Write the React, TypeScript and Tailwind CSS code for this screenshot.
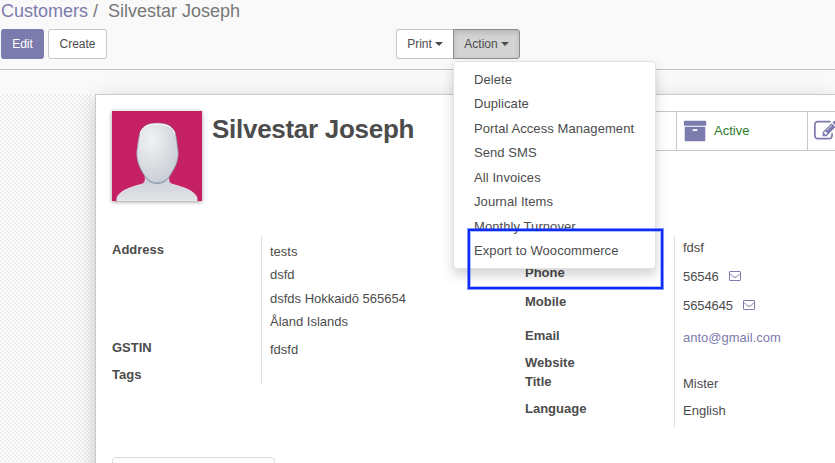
import React from 'react';

const actions = [
  'Delete',
  'Duplicate',
  'Portal Access Management',
  'Send SMS',
  'All Invoices',
  'Journal Items',
  'Monthly Turnover',
  'Export to Woocommerce',
];

type Line = { text: string; h: string; mail?: boolean; link?: boolean };

const leftLabels: Line[] = [
  { text: 'Address', h: 'h-[98px]' },
  { text: 'GSTIN', h: 'h-[27px]' },
  { text: 'Tags', h: 'h-[20px]' },
];
const leftValues: Line[] = [
  { text: 'tests', h: 'h-[23px]' },
  { text: 'dsfd', h: 'h-[24px]' },
  { text: 'dsfds Hokkaidō 565654', h: 'h-[23px]' },
  { text: 'Åland Islands', h: 'h-[28px]' },
  { text: 'fdsfd', h: 'h-[20px]' },
];
const rightLabels: Line[] = [
  { text: 'Phone', h: 'h-[29px]' },
  { text: 'Mobile', h: 'h-[34px]' },
  { text: 'Email', h: 'h-[27px]' },
  { text: 'Website', h: 'h-[19px]' },
  { text: 'Title', h: 'h-[27px]' },
  { text: 'Language', h: 'h-[18px]' },
];
const rightValues: Line[] = [
  { text: 'fdsf', h: 'h-[29px]' },
  { text: '56546', h: 'h-[29px]', mail: true },
  { text: '5654645', h: 'h-[32px]', mail: true },
  { text: 'anto@gmail.com', h: 'h-[46px]', link: true },
  { text: 'Mister', h: 'h-[27px]' },
  { text: 'English', h: 'h-[20px]' },
];

function Envelope() {
  return (
    <svg className="ml-[10px] h-[10px] w-3 shrink-0" viewBox="0 0 12 10" fill="none" stroke="#7c7bad">
      <rect x="0.5" y="0.5" width="11" height="9" rx="0.5" />
      <path d="M1 2.6 C2.5 4.2 4.5 6.3 6 6.3 C7.5 6.3 9.5 4.2 11 2.6" />
    </svg>
  );
}

function Archive() {
  return (
    <svg className="h-6 w-6 shrink-0" viewBox="0 0 1792 1792" fill="#7c7bad">
      <path d="M1088 832q0-26-19-45t-45-19h-256q-26 0-45 19t-19 45 19 45 45 19h256q26 0 45-19t19-45zm576-192v960q0 26-19 45t-45 19h-1408q-26 0-45-19t-19-45v-960q0-26 19-45t45-19h1408q26 0 45 19t19 45zm64-448v256q0 26-19 45t-45 19h-1536q-26 0-45-19t-19-45v-256q0-26 19-45t45-19h1536q26 0 45 19t19 45z" />
    </svg>
  );
}

function PencilSquare() {
  return (
    <svg className="h-6 w-6 shrink-0" viewBox="0 0 1792 1792" fill="#7c7bad">
      <path d="M888 1184l116-116-152-152-116 116v56h96v96h56zm440-720q-16-16-33 1l-350 350q-17 17-1 33t33-1l350-350q17-17 1-33zm80 594v190q0 119-84.5 203.5t-203.5 84.5h-832q-119 0-203.5-84.5t-84.5-203.5v-832q0-119 84.5-203.5t203.5-84.5h832q63 0 117 25 15 7 18 23 3 17-9 29l-49 49q-14 14-32 8-23-6-45-6h-832q-66 0-113 47t-47 113v832q0 66 47 113t113 47h832q66 0 113-47t47-113v-126q0-13 9-22l64-64q15-15 35-7t20 29zm-96-738l288 288-672 672h-288v-288zm444 132l-92 92-288-288 92-92q28-28 68-28t68 28l152 152q28 28 28 68t-28 68z" />
    </svg>
  );
}

function Avatar() {
  return (
    <svg className="h-[90px] w-[90px] shrink-0 bg-[#c62065] shadow-[0_1px_4px_rgba(0,0,0,0.4)]" viewBox="0 0 90 90">
      <defs>
        <radialGradient id="face" cx="0.35" cy="0.28" r="0.8">
          <stop offset="0" stopColor="#f1f2f3" />
          <stop offset="0.5" stopColor="#dcdfe3" />
          <stop offset="1" stopColor="#c6ccd5" />
        </radialGradient>
        <linearGradient id="body" x1="0" y1="0" x2="0" y2="1">
          <stop offset="0" stopColor="#c9ced6" />
          <stop offset="1" stopColor="#e1e3e7" />
        </linearGradient>
      </defs>
      <path d="M5 90V87C7 80 19 76 29 73.5C33 72 34 70 33 64H57C56 70 57 72 61 73.5C71 76 83 80 85 87V90Z" fill="url(#body)" stroke="#eceef2" strokeWidth="0.8" />
      <path d="M33 66C36 70.5 41 72.5 45 72.5C50 72.5 54 70.5 57 66" fill="none" stroke="#7d8c9c" strokeWidth="0.8" />
      <path d="M45 12.3C35 12 29 16 27.2 25C26 31 25.6 35 24.8 41C24.6 49 27 56 31.5 63C35 69 40 71.8 45 71.8C51 71.8 56 68.5 59.5 62C64 55 66.4 49 66.2 41C65.2 35 65 31 64 25C62 16 56 12 45 12.3Z" fill="url(#face)" stroke="#8797a8" strokeWidth="0.7" />
      <path d="M28 23C30 16 35 13 45 13C55 13 61 16 63 23" fill="none" stroke="#fff" strokeWidth="1" />
    </svg>
  );
}

function Caret() {
  return <span className="ml-[3px] h-0 w-0 border-x-4 border-t-4 border-x-transparent border-t-[#4c4c4c]" />;
}

function Lines({ items, bold }: { items: Line[]; bold?: boolean }) {
  return (
    <>
      {items.map((l) => (
        <div key={l.text} className={l.h}>
          <div
            className={`flex h-[18px] items-center whitespace-nowrap leading-[18px] ${bold ? 'font-bold' : ''} ${l.link ? 'text-[#7c7bad]' : ''} ${l.mail ? 'tracking-[-0.1px]' : ''}`}
          >
            {l.text}
            {l.mail && <div className="-mt-[3px]"><Envelope /></div>}
          </div>
        </div>
      ))}
    </>
  );
}

export default function App() {
  return (
    <div className="relative flex h-[463px] w-[835px] flex-col overflow-hidden bg-[#f9f9f9] font-['Liberation_Sans',Arial,sans-serif] text-[13px] text-[#4c4c4c]">
      <header className="h-[70px] shrink-0 border-b border-[#c0c0c0]">
        <div className="flex h-[29px] items-start pl-px text-[18px] leading-[22px]">
          <span className="text-[#7c7bad]">Customers</span>
          <span className="ml-[5px] text-[#777]">/</span>
          <span className="ml-[10px] text-[#777]">Silvestar Joseph</span>
        </div>
        <div className="flex h-[30px] pl-px text-[12px]">
          <button className="w-[43px] rounded-[3px] bg-[#7c7bad] text-white">Edit</button>
          <button className="ml-1 w-[59px] rounded-[3px] border border-[#c6c6c6] bg-white">Create</button>
          <button className="ml-[289px] flex w-[57px] items-center justify-center rounded-l-[3px] border border-r-0 border-[#c6c6c6] bg-white">
            Print
            <Caret />
          </button>
          <button className="flex w-[67px] items-center justify-center rounded-r-[3px] border border-[#8c8c8c] bg-[#d3d3d3] shadow-[inset_0_3px_5px_rgba(0,0,0,0.125)]">
            Action
            <Caret />
          </button>
        </div>
      </header>

      <div className="h-6 shrink-0" />
      <main className="flex h-[369px] shrink-0 bg-white bg-[conic-gradient(#ececec_25%,transparent_0_50%,#ececec_0_75%,transparent_0)] bg-[length:4px_4px] pl-[95px]">
        <section className="h-[400px] w-[740px] shrink-0 border-l border-t border-[#c8c8d3] bg-white pl-4 shadow-[0_5px_20px_-3px_rgba(0,0,0,0.25)]">
          <div className="flex h-[141px] pt-4">
            <Avatar />
            <h1 className="ml-[10px] mt-px w-[333px] shrink-0 whitespace-nowrap text-[26px] font-bold leading-[34px] tracking-[-0.28px]">Silvestar Joseph</h1>
            <div className="flex h-10 w-[291px] shrink-0 border-y border-[#c6c6c6]">
              <div className="w-[132px] shrink-0 border-r border-[#c6c6c6]" />
              <div className="flex w-[131px] shrink-0 items-center border-r border-[#c6c6c6] pl-[6px]">
                <Archive />
                <span className="ml-[7px] text-[#2b7a2b]">Active</span>
              </div>
              <div className="flex shrink-0 items-center pl-[6px]">
                <PencilSquare />
              </div>
            </div>
          </div>

          <div className="flex h-[221px]">
            <div className="w-[149px] pt-[5px]">
              <Lines items={leftLabels} bold />
            </div>
            <div className="h-[148px] w-[264px] border-l border-[#ddd] pl-2 pt-[7px]">
              <Lines items={leftValues} />
            </div>
            <div className="w-[149px] pt-[28px]">
              <Lines items={rightLabels} bold />
            </div>
            <div className="h-[191px] w-[160px] border-l border-[#ddd] pl-2 pt-[3px]">
              <Lines items={rightValues} />
            </div>
          </div>
          <div className="h-10 w-[163px] rounded border border-[#ddd] bg-white" />
        </section>
      </main>

      <ul className="absolute left-[453px] top-[61px] h-[208px] w-[203px] rounded-[4px] border border-[#e2e2e2] bg-white pl-5 pt-[6px] tracking-[0.08px] shadow-[0_6px_12px_rgba(0,0,0,0.175)]">
        {actions.map((a) => (
          <li key={a} className="h-[24.45px] whitespace-nowrap leading-[24px]">{a}</li>
        ))}
      </ul>
      <div className="absolute left-[468px] top-[229px] h-[60px] w-[195px] border-2 border-[#0b2cff] shadow-[0_0_0_1px_rgba(11,44,255,0.5),inset_0_0_0_1px_rgba(11,44,255,0.3)]" />
    </div>
  );
}
